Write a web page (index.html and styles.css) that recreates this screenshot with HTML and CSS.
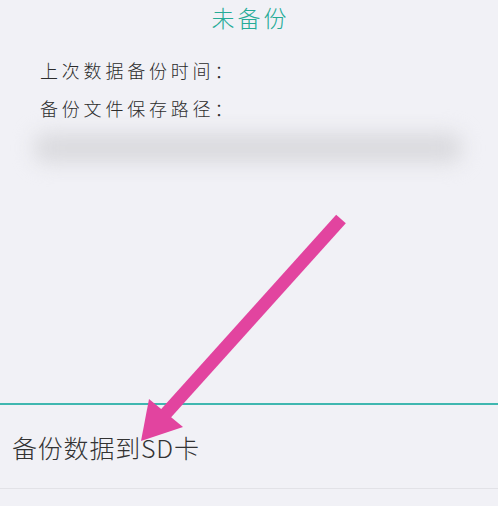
FILE: index.html
```html
<!DOCTYPE html>
<html lang="zh-CN">
<head>
<meta charset="utf-8">
<title>备份</title>
<link rel="stylesheet" href="styles.css">
</head>
<body>
<div class="page">
  <header class="title">未备份</header>
  <section class="info">
    <div class="row">上次数据备份时间：</div>
    <div class="row">备份文件保存路径：</div>
  </section>
  <div class="blur-band"></div>
  <div class="spacer"></div>
  <div class="action">备份数据到SD卡</div>
  <div class="footer"></div>
  <svg class="arrow" width="498" height="506" viewBox="0 0 498 506" aria-hidden="true">
    <line x1="341" y1="219" x2="160" y2="420" stroke="#e2449f" stroke-width="13"/>
    <polygon points="141,441 149,399 183,427" fill="#e2449f"/>
  </svg>
</div>
</body>
</html>
```

FILE: styles.css
```css
html, body {
  margin: 0;
  padding: 0;
  background: #f1f1f6;
}
.page {
  position: relative;
  width: 498px;
  height: 506px;
  display: flex;
  flex-direction: column;
  overflow: hidden;
  font-family: "Noto Sans CJK SC", "Noto Sans", sans-serif;
  font-weight: 300;
  color: #2c2c2c;
}
.title {
  text-align: center;
  color: #26ab97;
  font-size: 23px;
  letter-spacing: 3px;
  line-height: 34px;
  padding-left: 3px;
}
.info {
  padding-left: 40px;
  margin-top: 17px;
}
.row {
  font-size: 18px;
  letter-spacing: 3.8px;
  line-height: 38px;
}
.blur-band {
  margin: 6px 36px 0 34px;
  height: 30px;
  background: #dadade;
  filter: blur(10px);
  border-radius: 12px;
}
.spacer {
  flex: 1;
}
.action {
  height: 83px;
  border-top: 2px solid #3fb7b0;
  border-bottom: 1px solid #e2e2e7;
  padding-left: 12px;
  display: flex;
  align-items: center;
  font-size: 25px;
  letter-spacing: 0.8px;
  color: #333;
}
.footer {
  height: 17px;
  flex: none;
}
.arrow {
  position: absolute;
  left: 0;
  top: 0;
}
```
